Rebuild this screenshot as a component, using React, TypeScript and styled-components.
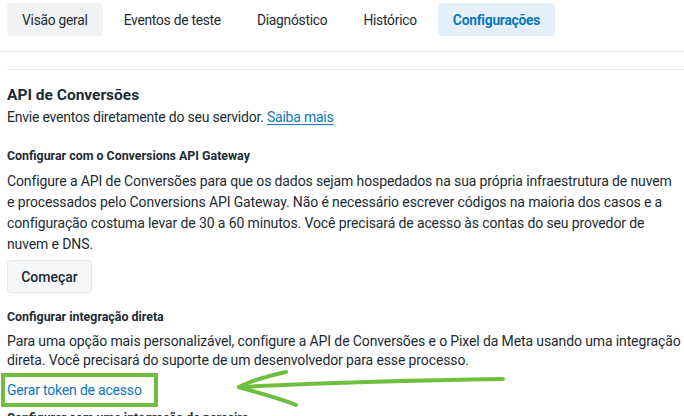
import React from "react";
import styled, { createGlobalStyle } from "styled-components";

const Global = createGlobalStyle`
  html, body { margin: 0; padding: 0; background: #ffffff; }
  body { font-family: Roboto, "Liberation Sans", Arial, sans-serif; color: #1c2b33; }
  * { box-sizing: border-box; }
`;

const Page = styled.div`
  position: relative;
  width: 684px;
  height: 416px;
  overflow: hidden;
  background: #fff;
`;

const TabBar = styled.nav`
  display: flex;
  align-items: flex-start;
  gap: 6px;
  height: 52px;
  padding: 3px 7px 0;
  border-bottom: 1px solid #eeeeee;
`;

const Tab = styled.div<{ $active?: boolean; $hover?: boolean }>`
  height: 33px;
  padding: 0 15px;
  display: flex;
  align-items: center;
  border-radius: 4px;
  font-size: 13.8px;
  letter-spacing: -0.25px;
  font-weight: ${(p) => (p.$active ? 700 : 400)};
  color: ${(p) => (p.$active ? "#0a78be" : "#1c2b33")};
  background: ${(p) => (p.$active ? "#e6f0fa" : p.$hover ? "#f1f2f3" : "transparent")};
  white-space: nowrap;
`;

const Content = styled.section`
  margin: 17px 0 0 7px;
  border-top: 1px solid #e6e6e6;
  padding-top: 15px;
  display: flex;
  flex-direction: column;
  align-items: flex-start;
`;

const Title = styled.h2`
  margin: 0;
  font-size: 15.5px;
  line-height: 20px;
  font-weight: 700;
  color: #1c2b33;
`;

const Sub = styled.p`
  margin: 2px 0 0;
  font-size: 14px;
  letter-spacing: -0.22px;
  line-height: 20px;
`;

const Link = styled.a<{ $underline?: boolean }>`
  color: #0a78be;
  text-decoration: ${(p) => (p.$underline ? "underline" : "none")};
  text-underline-offset: 2px;
`;

const SectionTitle = styled.h3<{ $top: number }>`
  margin: ${(p) => p.$top}px 0 0;
  font-size: 12.4px;
  line-height: 16px;
  font-weight: 700;
  color: #1c2b33;
  white-space: nowrap;
`;

const Para = styled.p<{ $lh: number }>`
  margin: 7px 0 0;
  font-size: 14px;
  letter-spacing: -0.12px;
  line-height: ${(p) => p.$lh}px;
  color: #1c2b33;
`;

const Line = styled.span`
  display: block;
  white-space: nowrap;
`;

const Button = styled.button`
  margin-top: 5px;
  width: 85px;
  height: 33px;
  border: 1px solid #e4e6e8;
  border-radius: 4px;
  background: #f5f6f7;
  font-family: inherit;
  font-size: 14px;
  font-weight: 500;
  color: #1c2b33;
`;

const Highlight = styled.div`
  margin: 3px 0 0 -6px;
  width: 157px;
  height: 34px;
  border: 4px solid #70be40;
  padding-left: 2px;
  display: flex;
  align-items: center;
  font-size: 14px;
  letter-spacing: -0.2px;
`;

const Arrow = styled.svg`
  position: absolute;
  left: 0;
  top: 0;
  pointer-events: none;
`;

export default function App() {
  return (
    <Page>
      <Global />
      <TabBar>
        <Tab $hover>Visão geral</Tab>
        <Tab>Eventos de teste</Tab>
        <Tab>Diagnóstico</Tab>
        <Tab>Histórico</Tab>
        <Tab $active>Configurações</Tab>
      </TabBar>
      <Content>
        <Title>API de Conversões</Title>
        <Sub>
          Envie eventos diretamente do seu servidor.{" "}
          <Link $underline href="#">Saiba mais</Link>
        </Sub>
        <SectionTitle $top={21}>Configurar com o Conversions API Gateway</SectionTitle>
        <Para $lh={21}>
          <Line>Configure a API de Conversões para que os dados sejam hospedados na sua própria infraestrutura de nuvem</Line>
          <Line>e processados pelo Conversions API Gateway. Não é necessário escrever códigos na maioria dos casos e a</Line>
          <Line>configuração costuma levar de 30 a 60 minutos. Você precisará de acesso às contas do seu provedor de</Line>
          <Line>nuvem e DNS.</Line>
        </Para>
        <Button>Começar</Button>
        <SectionTitle $top={16}>Configurar integração direta</SectionTitle>
        <Para $lh={19}>
          <Line>Para uma opção mais personalizável, configure a API de Conversões e o Pixel da Meta usando uma integração</Line>
          <Line>direta. Você precisará do suporte de um desenvolvedor para esse processo.</Line>
        </Para>
        <Highlight>
          <Link href="#">Gerar token de acesso</Link>
        </Highlight>
        <SectionTitle $top={3}>Configurar com uma integração de parceiro</SectionTitle>
      </Content>
      <Arrow width="684" height="416" viewBox="0 0 684 416">
        <g fill="none" stroke="#70be40" strokeWidth="4" strokeLinecap="round" strokeLinejoin="round">
          <path d="M503 379 C 430 380, 320 383, 239 387" />
          <path d="M286 372 C 268 376, 250 381, 239 387 C 255 392, 280 398, 296 405" />
        </g>
      </Arrow>
    </Page>
  );
}
